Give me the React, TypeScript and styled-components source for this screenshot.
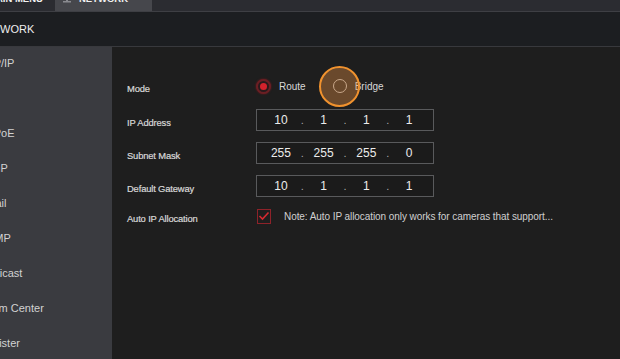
import React from 'react';
import styled, { createGlobalStyle } from 'styled-components';

const GlobalStyle = createGlobalStyle`
  html, body {
    margin: 0;
    padding: 0;
    background: #1e1e1e;
    overflow: hidden;
  }
`;

const Screen = styled.div`
  margin: -12px 0 0 -30px;
  width: 650px;
  height: 371px;
  display: flex;
  flex-direction: column;
  font-family: "Liberation Sans", Arial, sans-serif;
`;

const TopBar = styled.div`
  display: flex;
  height: 23px;
  flex-shrink: 0;
  background: #2b2c31;
  border-bottom: 1px solid #3e3f44;
`;

const Tab = styled.div<{ $active?: boolean }>`
  display: flex;
  align-items: center;
  gap: 7px;
  width: ${(p) => (p.$active ? '97px' : '85px')};
  padding: 0 0 3px ${(p) => (p.$active ? '7px' : '18px')};
  box-sizing: border-box;
  background: ${(p) => (p.$active ? '#46474c' : 'transparent')};
  color: #f2f2f2;
  font-size: 9.5px;
  font-weight: bold;
  white-space: nowrap;
`;

const TabClose = styled.span`
  margin-left: auto;
  padding-right: 5px;
  color: #8d8e92;
  font-size: 9px;
  font-weight: normal;
`;

const Header = styled.div`
  display: flex;
  align-items: center;
  height: 34px;
  flex-shrink: 0;
  padding-left: 8px;
  background: #1c1e21;
  border-bottom: 1px solid #38393d;
  color: #eeeeee;
  font-size: 11px;
`;

const Main = styled.div`
  display: flex;
  flex: 1;
`;

const Sidebar = styled.div`
  width: 142px;
  flex-shrink: 0;
  background: #3a3b40;
`;

const MenuItem = styled.div`
  display: flex;
  align-items: center;
  height: 35px;
  padding: 0 0 3px 9px;
  box-sizing: border-box;
  color: #d2d2d2;
  font-size: 11px;
  white-space: nowrap;
`;

const Content = styled.div`
  flex: 1;
  display: flex;
  flex-direction: column;
  gap: 11px;
  padding: 27px 0 0 15px;
  background: #1e1e1e;
`;

const Row = styled.div<{ $h: number }>`
  display: flex;
  align-items: center;
  height: ${(p) => p.$h}px;
`;

const Label = styled.div`
  width: 129px;
  flex-shrink: 0;
  margin-top: 4px;
  color: #d8d8d8;
  font-size: 9.4px;
  letter-spacing: -0.15px;
  -webkit-text-stroke: 0.2px #d8d8d8;
`;

const RadioGroup = styled.div`
  display: flex;
  align-items: center;
`;

const RadioOption = styled.label`
  position: relative;
  display: flex;
  align-items: center;
  gap: 8px;
  margin-right: 27px;
  color: #d8d8d8;
  font-size: 10px;
`;

const RadioCircle = styled.span<{ $checked?: boolean }>`
  display: flex;
  align-items: center;
  justify-content: center;
  width: ${(p) => (p.$checked ? '15px' : '14px')};
  height: ${(p) => (p.$checked ? '15px' : '14px')};
  box-sizing: border-box;
  border-radius: 50%;
  border: ${(p) => (p.$checked ? '2px solid #6b1f24' : '1px solid #b3b3b3')};
  background: ${(p) => (p.$checked ? '#2a1a1c' : 'transparent')};
  box-shadow: ${(p) => (p.$checked ? '0 0 2px #7a1a1f' : 'none')};

  &::after {
    content: '';
    display: ${(p) => (p.$checked ? 'block' : 'none')};
    width: 7px;
    height: 7px;
    border-radius: 50%;
    background: #d3222c;
  }
`;

const ClickMarker = styled.span`
  position: absolute;
  left: -14px;
  top: 50%;
  width: 41px;
  height: 41px;
  margin-top: -20px;
  box-sizing: border-box;
  border-radius: 50%;
  border: 2px solid #f0922e;
  background: rgba(240, 150, 70, 0.36);
  pointer-events: none;
`;

const IpBox = styled.div`
  display: flex;
  align-items: center;
  width: 178px;
  height: 22px;
  box-sizing: border-box;
  padding: 0 6px;
  border: 1px solid #595a5c;
  background: #1b1b1b;
`;

const Octet = styled.span`
  width: 36px;
  text-align: center;
  color: #ececec;
  font-size: 12px;
`;

const Dot = styled.span`
  width: 7px;
  text-align: center;
  color: #a8a8a8;
  font-size: 11px;
`;

const CheckBox = styled.span`
  display: flex;
  align-items: center;
  justify-content: center;
  width: 14px;
  height: 15px;
  box-sizing: border-box;
  border: 1px solid #8e2229;
  margin: 0 13px 0 1px;
`;

const Note = styled.span`
  color: #d0d0d0;
  font-size: 10px;
  letter-spacing: -0.07px;
  white-space: nowrap;
`;

const NetIcon = () => (
  <svg width="10" height="12" viewBox="0 0 10 12">
    <rect x="0.5" y="0.5" width="9" height="6" fill="none" stroke="#8a8b90" />
    <rect x="4" y="7" width="2" height="2" fill="#8a8b90" />
    <rect x="1" y="9" width="8" height="1.5" fill="#8a8b90" />
  </svg>
);

const IpField = ({ value }: { value: string }) => {
  const parts = value.split('.');
  return (
    <IpBox>
      {parts.map((p, i) => (
        <React.Fragment key={i}>
          <Octet>{p}</Octet>
          {i < parts.length - 1 && <Dot>.</Dot>}
        </React.Fragment>
      ))}
    </IpBox>
  );
};

const menu = ['TCP/IP', 'Port', 'PPPoE', 'UPnP', 'Email', 'SNMP', 'Multicast', 'Alarm Center', 'Register'];

export default function App() {
  return (
    <>
      <GlobalStyle />
      <Screen>
        <TopBar>
          <Tab>MAIN MENU</Tab>
          <Tab $active>
            <NetIcon />
            NETWORK
            <TabClose>×</TabClose>
          </Tab>
        </TopBar>
        <Header>NETWORK</Header>
        <Main>
          <Sidebar>
            {menu.map((m) => (
              <MenuItem key={m}>{m}</MenuItem>
            ))}
          </Sidebar>
          <Content>
            <Row $h={24}>
              <Label>Mode</Label>
              <RadioGroup>
                <RadioOption>
                  <RadioCircle $checked />
                  Route
                </RadioOption>
                <RadioOption>
                  <RadioCircle />
                  Bridge
                  <ClickMarker />
                </RadioOption>
              </RadioGroup>
            </Row>
            <Row $h={22}>
              <Label>IP Address</Label>
              <IpField value="10.1.1.1" />
            </Row>
            <Row $h={22}>
              <Label>Subnet Mask</Label>
              <IpField value="255.255.255.0" />
            </Row>
            <Row $h={22}>
              <Label>Default Gateway</Label>
              <IpField value="10.1.1.1" />
            </Row>
            <Row $h={16}>
              <Label>Auto IP Allocation</Label>
              <CheckBox>
                <svg width="12" height="10" viewBox="0 0 12 10">
                  <path d="M1.5 5 L4.5 8 L10.5 1.5" fill="none" stroke="#d42a30" strokeWidth="1.6" />
                </svg>
              </CheckBox>
              <Note>Note: Auto IP allocation only works for cameras that support...</Note>
            </Row>
          </Content>
        </Main>
      </Screen>
    </>
  );
}
